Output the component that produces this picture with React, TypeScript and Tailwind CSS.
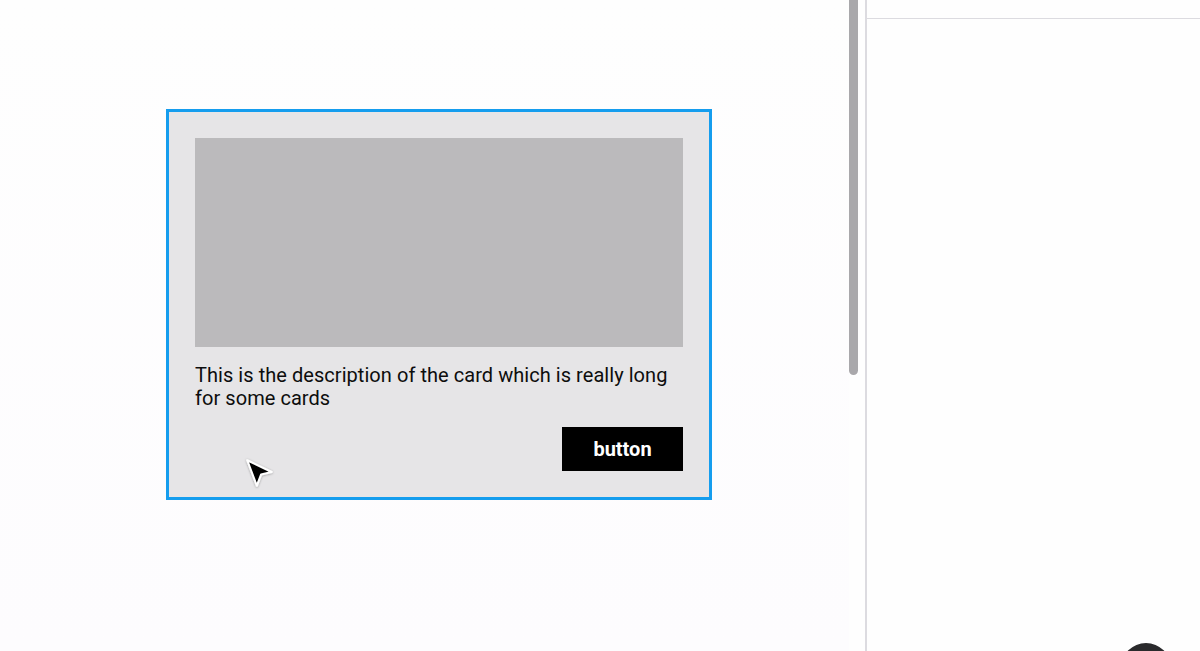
import React from "react";

export default function App() {
  return (
    <div
      className="flex h-[651px] w-[1200px] overflow-hidden bg-[#fdfdfe]"
      style={{ fontFamily: "Roboto, 'Liberation Sans', sans-serif" }}
    >
      <div className="relative w-[849px] shrink-0 bg-gradient-to-b from-[#fefefe] to-[#fdfcfe] pl-[166px] pt-[109px]">
        <div className="w-[546px] border-[3px] border-[#159dee] bg-[#e6e5e7] px-[26px] pb-[26px] pt-[26px]">
          <div className="h-[209px] w-full bg-[#bbbabc]" />
          <p className="mt-[17px] text-[20px] leading-[23px] text-[#0d0d0d] tracking-[0.05px]">
            This is the description of the card which is really long for some cards
          </p>
          <div className="mt-[17px] flex justify-end">
            <button className="flex h-[44px] w-[121px] items-center justify-center bg-black text-[20px] font-bold text-white">
              button
            </button>
          </div>
        </div>
        <svg
          className="absolute left-[243px] top-[456px]"
          width="34"
          height="34"
          viewBox="0 0 32 32"
        >
          <defs>
            <filter id="sh" x="-30%" y="-30%" width="160%" height="160%">
              <feDropShadow dx="0" dy="0.5" stdDeviation="0.8" floodColor="#000" floodOpacity="0.35" />
            </filter>
          </defs>
          <path
            d="M4 4 L27 15 L17 17.5 L13 28 Z"
            fill="#000"
            stroke="#fff"
            strokeWidth="2"
            strokeLinejoin="round"
            filter="url(#sh)"
          />
        </svg>
      </div>
      <div className="w-[16px] shrink-0 bg-[#fefefe]">
        <div className="h-[375px] w-[9px] rounded-b-[5px] bg-[#a9a8ab]" />
      </div>
      <div className="relative flex-1 border-l-2 border-[#dcdbe0] bg-[#fefefe]">
        <div className="h-[19px] border-b border-[#dcdbe0]" />
        <div className="absolute left-[254px] top-[643px] h-[50px] w-[50px] rounded-full bg-[#2a2a2c]" />
      </div>
    </div>
  );
}
